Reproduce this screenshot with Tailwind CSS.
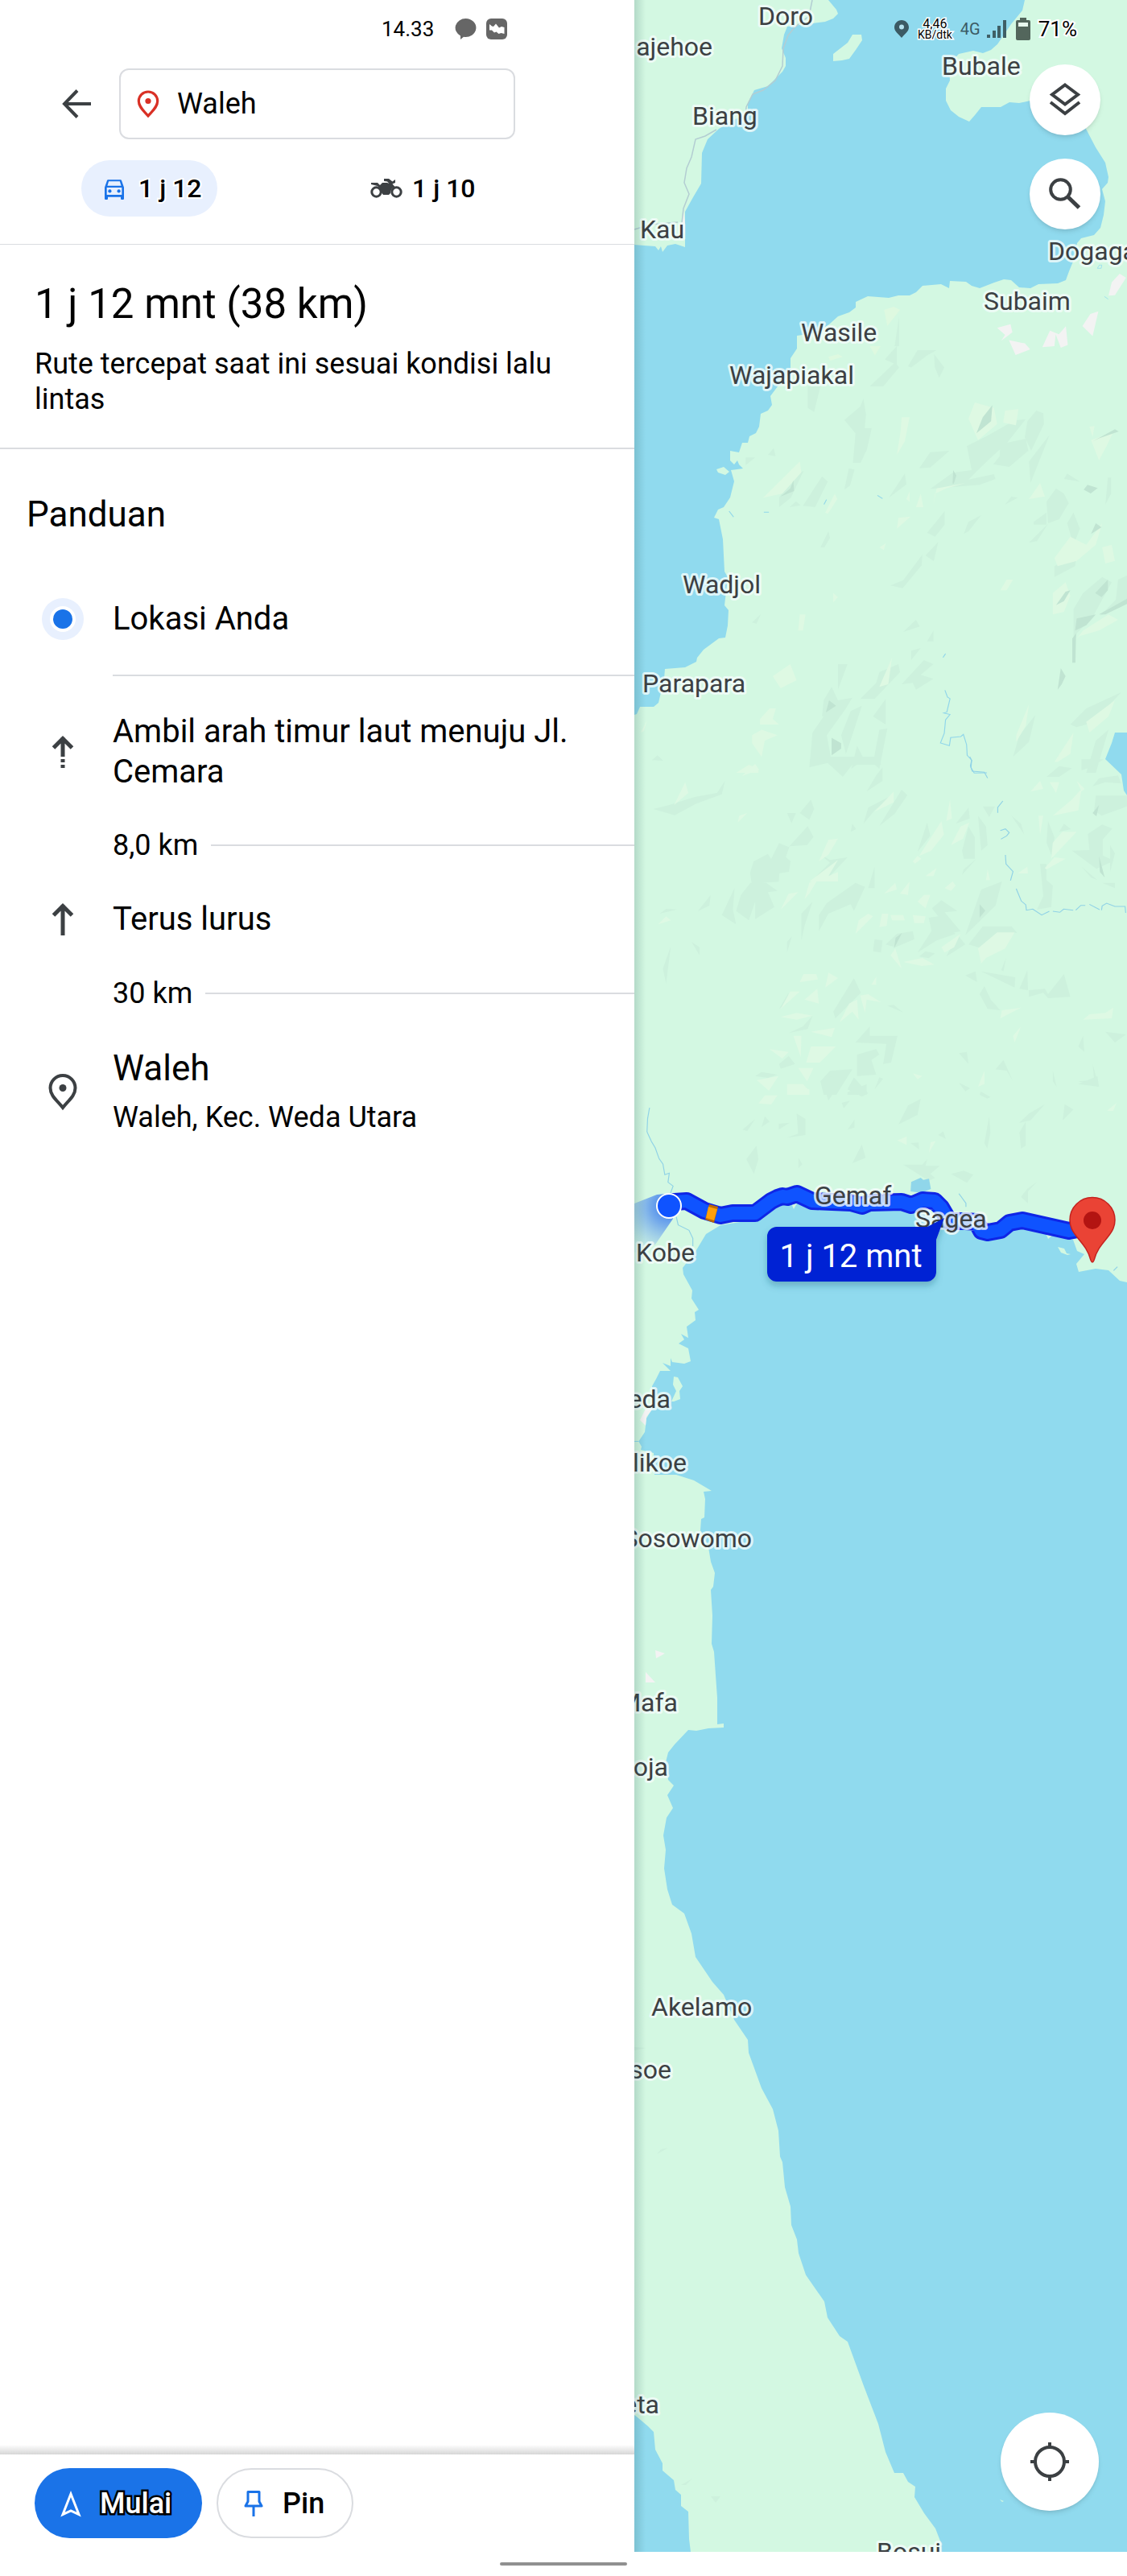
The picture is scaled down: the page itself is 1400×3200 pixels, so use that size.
<!DOCTYPE html>
<html lang="id">
<head>
<meta charset="utf-8">
<meta name="viewport" content="width=device-width, initial-scale=1">
<title>Rute ke Waleh</title>
<script src="https://cdn.jsdelivr.net/npm/@tailwindcss/browser@4"></script>
</head>
<body class="bg-white text-black font-['Roboto',sans-serif]">
<div class="grid min-h-screen grid-cols-[minmax(0,788fr)_minmax(0,612fr)]">

  <!-- Directions panel -->
  <aside class="flex flex-col bg-white">
    <header class="border-b border-[#dadce0] pt-5 pb-[34px]">
      <div class="flex h-8 items-center pl-[474px]">
        <span class="text-[26px] leading-8">14.33</span>
        <svg class="ml-[26px] h-[26px] w-[27px]" viewBox="0 0 27 26" fill="#666"><path d="M13.500 0a13 11.500 0 1 1-2.500 22.800L7 26v-4.600A13 11.500 0 0 1 13.500 0z"/></svg>
        <svg class="ml-3 h-[26px] w-[26px]" viewBox="0 0 26 26"><rect width="26" height="26" rx="6" fill="#666"/><path d="M4 7l3 2.500 2 .5 3-3.500 4 5 3-1.500 3.500 1v8l-4-1-3 1-3-2.500-2.500 1-3-3H4z" fill="#fff"/></svg>
      </div>
      <div class="mt-[33px] flex items-center pl-[77px]">
        <button type="button" aria-label="Kembali" class="mr-[35px]">
          <svg class="h-9 w-9" viewBox="0 0 36 36" fill="none" stroke="#3c4043" stroke-width="4"><path d="M36 18H4M19 1.500L3 18l16 16.500"/></svg>
        </button>
        <label class="flex h-[88px] w-[492px] items-center rounded-xl border-2 border-[#dadce0] pl-5">
          <svg class="h-[34px] w-7 shrink-0" viewBox="0 0 28 34"><path d="M14 2C7.500 2 2.300 7 2.300 13.500 2.300 21 9 26 14 32c5-6 11.700-11 11.700-18.500C25.700 7 20.500 2 14 2z" fill="none" stroke="#d93025" stroke-width="3.200"/><circle cx="14" cy="13.500" r="3.600" fill="#d93025"/></svg>
          <input type="text" value="Waleh" aria-label="Tujuan" class="ml-[22px] w-full min-w-0 bg-transparent text-[36px] leading-11 outline-none">
        </label>
      </div>
      <nav class="mt-[26px] flex h-[70px] items-center pl-[101px]">
        <button type="button" class="flex h-[70px] w-[169px] items-center rounded-full bg-[#e8f0fe] pl-[25px] text-[32px] font-medium">
          <svg class="mr-3.5 h-8 w-8 shrink-0" viewBox="0 0 24 24" fill="#1a73e8"><path d="M18.900 5c-.2-.6-.8-1-1.400-1h-11c-.7 0-1.200.4-1.400 1L3 11v10.500c0 .5.500 1 1 1h1c.600 0 1-.5 1-1V20h12v1.500c0 .5.500 1 1 1h1c.500 0 1-.5 1-1V11zM6.800 5.500h10.300L18.400 9.500H5.600zM19 18H5v-6.700h14z"/><circle cx="7.800" cy="14.600" r="1.600"/><circle cx="16.200" cy="14.600" r="1.600"/></svg>
          <span class="[-webkit-text-stroke:4px_#fff] [paint-order:stroke_fill]">1 j 12</span>
        </button>
        <button type="button" class="ml-[190px] flex items-center text-[32px] font-medium">
          <svg class="mr-3 h-7 w-10 shrink-0" viewBox="0 0 40 28" fill="none"><circle cx="7.500" cy="18.500" r="5.700" stroke="#3c4043" stroke-width="3"/><circle cx="32.500" cy="18.500" r="5.700" stroke="#3c4043" stroke-width="3"/><path d="M1 7h8l3 3 3-3h6l2.500 1-2.500-2.500-4-.5V2h6l4.500 3.500L31 3v4l-3.500 1.500 3 3.500c-4 2-5 4-5.500 8l-2 2h-7l-3-4c0-4-2-7-8-8L1 9z" fill="#3c4043"/></svg>
          <span>1 j 10</span>
        </button>
      </nav>
    </header>

    <section class="border-b-2 border-[#dadce0] px-[43px] pt-11 pb-[38px]">
      <h1 class="text-[51px] leading-[60px]">1 j 12 mnt (38 km)</h1>
      <p class="mt-[22px] text-[36px] leading-11">Rute tercepat saat ini sesuai kondisi lalu lintas</p>
    </section>

    <section class="grow pt-14">
      <h2 class="pl-[33px] text-[44px] leading-[50px]">Panduan</h2>
      <ol class="mt-[79px] text-[40px] leading-[50px]">
        <li>
          <div class="flex items-center gap-9 pb-[43px] pl-[52px]">
            <svg class="h-[52px] w-[52px] shrink-0" viewBox="0 0 52 52"><circle cx="26" cy="26" r="26" fill="#e8f0fe"/><circle cx="26" cy="26" r="16" fill="#fff"/><circle cx="26" cy="26" r="12" fill="#1a73e8"/></svg>
            <p>Lokasi Anda</p>
          </div>
          <div class="ml-[140px] h-0.5 bg-[#dadce0]"></div>
        </li>
        <li class="pt-11">
          <div class="flex items-center gap-9 pr-12 pl-[52px]">
            <svg class="h-[52px] w-[52px] shrink-0" viewBox="0 0 52 52" fill="none" stroke="#3c4043" stroke-width="5"><path d="M26 8v24M14.500 21L26 9.500 37.500 21M26 35v4M26 42v4"/></svg>
            <p>Ambil arah timur laut menuju Jl. Cemara</p>
          </div>
          <div class="mt-11 flex items-center pl-[140px]"><span class="text-[36px] leading-11">8,0 km</span><span class="ml-4 h-0.5 grow bg-[#dadce0]"></span></div>
        </li>
        <li class="pt-11">
          <div class="flex items-center gap-9 pl-[52px]">
            <svg class="h-[52px] w-[52px] shrink-0" viewBox="0 0 52 52" fill="none" stroke="#3c4043" stroke-width="5"><path d="M26 8v38M14.500 21L26 9.500 37.500 21"/></svg>
            <p>Terus lurus</p>
          </div>
          <div class="mt-11 flex items-center pl-[140px]"><span class="text-[36px] leading-11">30 km</span><span class="ml-4 h-0.5 grow bg-[#dadce0]"></span></div>
        </li>
        <li class="flex items-center gap-9 pt-[46px] pl-[52px]">
          <svg class="h-[52px] w-[52px] shrink-0" viewBox="0 0 52 52"><path d="M26 6c-8.700 0-15.500 7-15.500 15.500C10.500 31.500 19.500 37.500 26 46c6.500-8.500 15.500-14.500 15.500-24.500C41.500 13 34.700 6 26 6z" fill="none" stroke="#3c4043" stroke-width="4"/><circle cx="26" cy="21.500" r="4.500" fill="#3c4043"/></svg>
          <div>
            <p class="text-[44px]">Waleh</p>
            <p class="mt-3.5 text-[36px] leading-11">Waleh, Kec. Weda Utara</p>
          </div>
        </li>
      </ol>
    </section>

    <footer>
      <div class="h-3 bg-linear-to-b from-white to-[#d6d6d6]"></div>
      <div class="flex gap-[18px] pt-[17px] pl-[43px]">
        <button type="button" class="flex h-[87px] w-[208px] items-center rounded-full bg-[#1a73e8] pl-[33px] text-[36px] font-medium text-white">
          <svg class="mr-6 h-8 w-6 overflow-visible" viewBox="0 0 24 32" fill="none" stroke="#fff" stroke-width="3"><path d="M12 4L2 29.500l10-4.500 10 4.500z"/></svg>
          <span class="[-webkit-text-stroke:5px_#000] [paint-order:stroke_fill]">Mulai</span>
        </button>
        <button type="button" class="flex h-[87px] w-[170px] items-center rounded-full border-2 border-[#dadce0] pl-8 text-[36px] font-medium">
          <svg class="mr-6 h-8 w-6" viewBox="0 0 24 32" fill="none" stroke="#1a73e8" stroke-width="3"><path d="M5 1.500h14v12l3 5.500H2l3-5.500zM12 19v13" stroke-linejoin="round"/></svg>
          <span>Pin</span>
        </button>
      </div>
      <div class="mt-[30px] mr-[9px] mb-[13px] ml-auto h-1 w-[158px] rounded-full bg-[#909090]"></div>
    </footer>
  </aside>

  <!-- Map -->
  <section class="flex flex-col pb-[30px]">
    <div class="relative grow overflow-hidden bg-[#90daee]">
      <svg class="absolute inset-0 h-full w-full" viewBox="0 0 612 3170" preserveAspectRatio="xMinYMin slice" aria-label="Peta rute">
        <defs>
          <linearGradient id="edge"><stop offset="0" stop-color="#205050" stop-opacity=".18"/><stop offset="1" stop-color="#205050" stop-opacity="0"/></linearGradient>
          <radialGradient id="beam" gradientUnits="userSpaceOnUse" cx="43" cy="1498" r="62"><stop offset="0" stop-color="#1b62f0" stop-opacity=".9"/><stop offset=".4" stop-color="#3a7af0" stop-opacity=".6"/><stop offset="1" stop-color="#6fa8f0" stop-opacity=".1"/></radialGradient>
          <filter id="soft" x="-20%" y="-20%" width="140%" height="170%"><feDropShadow dx="0" dy="5" stdDeviation="4" flood-color="#1f5e74" flood-opacity=".35"/></filter>
        </defs>
        <rect width="612" height="3170" fill="#90daee"/>
        <!-- land masses -->
        <g fill="#d3f8e2">
          <path d="M0 0H241L251 12 253 17 247 23 237 27 229 28 190 33 186 43 183 60 188 72V82L184 89 176 97 166 107 149 112 145 120 141 128V140L122 150 105 160 91 173 84 190 83 228 73 245 63 263V307L51 303 41 305 35 313 33 306 30 311 26 306 12 305 0 304z"/>
          <path d="M271 43H282L283 50 275 62 267 73 258 75 247 76V67L265 53z"/>
          <path d="M485 0L482 13 468 30 451 55 443 62 433 66 421 63 403 67 391 80 392 100 387 110V125L393 137 403 145 416 151 423 143 431 133 455 133 466 127 478 128 492 125H550L561 160 573 183 585 202 589 220 588 227 581 235 585 250 583 267 579 283 571 292 555 296 550 302 547 320 540 337 536 348 526 352 502 353 492 358 478 357 468 348 459 347 447 351 429 358 419 355 412 350 392 349 391 358 381 353 358 355 350 363 342 367H328L316 370 290 368 275 375V382L267 388 253 393 243 402 229 413 202 417V433L194 445V462L178 480 169 492 171 503 166 510 157 514 155 530 151 538 143 542 141 550H134L130 562 119 560V572L124 577 128 572 130 577 135 582 120 584 124 598 119 618 111 630 104 633 99 643 105 645 110 670 112 710 116 717 112 752 117 758 116 777 113 792 105 793 86 807 78 817 77 822 63 829 38 831 37 843 30 873 24 878H7L3 887 0 888V1790H5L9 1797 8 1801 24 1805 25 1832 52 1832 74 1839 96 1852 86 1853 88 1862 87 1885 83 1887 82 1901 92 1922 95 1940 100 1954 98 1971 95 1975 97 2007 96 2042 99 2052 101 2081 103 2109V2142L111 2141V2146L92 2147 77 2150 67 2149 50 2167 42 2177 39 2189 42 2211 49 2218 41 2230 48 2246 40 2258 36 2280 39 2298 37 2321 41 2347 47 2366 62 2377 71 2402 76 2431 97 2462 111 2478 124 2509 141 2534 142 2550 158 2594 172 2620 179 2647 181 2679 184 2686 187 2717 194 2741 195 2764 202 2782 204 2799 213 2826 236 2859 240 2879 255 2902 265 2909 285 2964 303 3011 312 3046 323 3072H334L340 3083 349 3089 348 3102 360 3122 374 3141 381 3159V3170H70L68 3154 67 3120 58 3113V3099L51 3093 49 3081 35 3069V3060L26 3043 24 3021 17 3014 4 3003 0 3000V1791H5L13 1779 15 1762 22 1750V1722L27 1713 32 1703H45L35 1693 45 1697V1687L47 1692 62 1694 70 1691 67 1675 55 1669 62 1664 58 1657 67 1662 65 1648 76 1640 75 1630 80 1627 71 1613 72 1603 61 1583 60 1575 77 1553 89 1533 107 1522 150 1515 170 1500 194 1493 198 1502 203 1493 221 1500 283 1500 344 1503 391 1520 421 1530 439 1536 480 1524 511 1532 514 1539 519 1535 545 1540 550 1554 559 1558 549 1570 552 1580 573 1576 589 1578 603 1591 612 1593V0z"/>
          <path d="M102 583L111 580 118 586 113 590 104 587zM49 1710L54 1711 60 1722 56 1728 57 1738 49 1741H46L52 1728 48 1720zM454 3105l5 2-2 1zM526 1549l8 2 3 6 5 1-4 1-8-3z"/>
        </g>
        <path fill="#90daee" d="M612 910H597L593 923 585 943 605 962 608 982 612 988z"/>
        <!-- hill shading, northern part -->
        <g transform="translate(-8 0) scale(.3954 .3333)">
          <path fill="#f3f3f3" d="M1545 1020l20 15-35 65-20 2 10-50zM1478 1160l-18 93-32-38 25-45zM1160 1222l42-14 6 30-35 32 12-22zM1197 1268l50 12 17 22-46 21zM1326 1232l28 14 22-30 6 70-22 10-16-50-4 44-38 4z"/>
          <path fill="#cdf1dd" d="M845 1290v70l-38-20zM880 1365l30-60h60l-30 20-50 45zM962 1320l32 50-16 38-14-40zM760 1440l80-90 12 20-50 70zM852 1180v110l-14 0z"/>
          <path fill="#def9e0" d="M805 1155l30-12 20 12-40 60zM760 1290l34 0-18 35zM630 1330l30-10 15 10-40 14z"/>
          <path fill="none" stroke="#90daee" stroke-width="2" d="M1475 1000l6-12 8 0-2 12zM1497 1105l12 10"/>
        </g>
        <g transform="translate(-8 480) scale(.3954 .3333)">
          <path fill="#cdf1dd" d="M740 45l8 60-4 50 22 0-15 80-20 50h-24l8-110-35-50 50-50zM565 0h40l-20 95-20-15zM915 305l35-60 60-5-60 62zM950 382l70-60 60-10-15-90 60-35 90-60 35-5-60 90-60 65-60 70 80-20 5 18-50 22zM1255 130l28-40 22 10 2 40-40 100-20-50zM1170 215l80-20 8 45-60 60-50-10 20-30zM1325 180l-60 180-5-80zM820 415l50-90 5 40zM680 385l14-80 18 5-14 60zM550 445l60-110 18 20-40 95zM475 450v-35l45-85 32-15-40 100zM508 450l20-22 15 15zM605 600l25-60 5 25-18 35zM940 545l35-50 20-30v50l-30 45zM935 630l40-50-14 72zM825 742l40-20 60-95-2 40-60 85zM1055 550l15-45 40-25-40 60zM1275 505l40-35v45h-40zM1320 510l-5-80 30-50 25 20 15 35-30 60zM1260 582l60-70-35 65zM865 915l40-45 12 25zM940 950l20-40v40zM390 880l28-32-14 36zM660 1130v-95h30zM730 1165l50-60 10-40 60-30 5 30-80 100zM860 1110l70-90 30 15-40 40 40 15-55 40-10-25zM770 1230l40-65v95zM610 1230l5-60 25-50 20 50 45-10-20 40-60 100 15 100-70 20 10-130 35-60zM670 1300l30-90 35-20-30 110-20 70zM790 1280l25-5-25 150-20-20zM720 1340l22 50-40 35zM1185 440l20-30 20 5zM1400 960l0-130 30-60 60-60 30 20-60 130-50 60zM1540 720l28-15v100l-45 30-40 20 50-60zM1390 1260l50-60 110-60-40 50-40 60-60 20zM1440 1440l30-120 40-40-20 80-20 80zM1210 1380l20-80 50-75-20 100zM1400 590l-20-80 20-40 20 60zM1500 440l8-100h10v60zM1370 345l10-20 40 30zM1340 670l70-40-5 40-65 40zM890 1020v-35l30-10zM370 265h30l-30 28zM440 255l18-25 6 30zM75 1393l18-18 18 20z"/>
          <path fill="#def9e3" d="M860 115l25 0-15 90-25 50 12-90zM1090 60l60 20 10 60-60 60-30-80zM1185 90l42-5-8 60-40-10zM480 350l60-70 5 40-60 80-60 15zM1455 200l70-30-20 50-25 55zM1450 150l16-2-6 40zM620 470l30-70 8 20-30 55zM845 530l5-40 38-5zM790 600l20-15-6 25zM960 440l10-60 90-20-60 20-35 20zM1170 760l20-40 20 0-20 40zM645 805v-35l15 15zM535 910l5-60 18 0-8 60zM1340 640l50-80 50 30 50-80-20 80-60 60-60 20zM1335 850l0-80 40-40 15 50-20 60zM1410 940l20-30 80-60 30 20-60 40-60 20zM455 1080l55-45 20 60-50 30zM415 1240l30-40 20 0-10 40 20 20-60 0zM390 1300l30-20 50 20-40 20-10 60-30-50zM1220 1300l40-115-10 80-30 60zM1440 1250l90-80-20 60-60 60zM1340 1400l60-110-10 80-40 30zM790 1120l40-110-12 100zM40 1290l20-45-10 40zM340 1440l40-30 30 15v15zM1490 600l30-10 10 60-30 10zM1260 420l35-60 15 50zM905 450l15-50 8 50zM875 420l10-30v40z"/>
          <path fill="#c0e4d2" d="M1095 175l20-60 30-45-4 60zM1020 362l2-50 10 20-8 30zM480 410l30-30 10-30 2 40zM1432 385l12-18 32 12-22 20zM1460 205l70-45 12 8-60 25zM1455 550l15-40 18 15zM1468 770l40-50v40l-20 25zM1345 815l30-50 15-5-20 40zM1405 910l5-45 60-15-30 40zM1396 1030l0-90 12-20-2 110zM1350 1130l10-80 15 30-12 30zM622 1215l10-45 22 20zM640 1375v-65l30 20v20zM1480 850l90-60v20l-70 40z"/>
          <path fill="none" stroke="#90d6ea" stroke-width="3" d="M996 1132l8 26 8 6-10 50-10 3 20 6-14 20-4 50-12 36 28 10 4-30 32-4 8-8 10 38 2 40 14 18-2 28 10 20 40-1M616 440l8-18M784 406l16 12M427 469h16M318 465l14 22M990 1010l8-14"/>
        </g>
        <!-- hill shading, middle part -->
        <g transform="translate(-8 940) scale(.3954 .3333)">
          <path fill="#cdf1dd" d="M80 195l50-15 80-30 70-15 25-45-10 50-80 35-68 43zM395 390l45-28 10 20 25-60 30 15 60-78 18 40-20 30-55 5-12 40 15 15-5 40-30 5-2 32-30 2-55 5-5-40zM540 210l35-50 10 35-15 40zM500 210l28 0-14 38zM340 575l15-60 30-45h50l35 30-30 5 20 55-60 45 0-65-20 70zM295 590l40-100-5 80 10 55zM600 650v-60l25-45 90-75 30 15-35 90-10-25-70 35zM545 685v-100l35-45-25 90zM220 575l40-60-4 40zM575 465l60-70-30-30 30 20 55-10-55 70zM740 250l15-60 80-50-60 60zM790 258l70-135 18 20-40 70zM750 130l30-60 20-30v50zM590 0h200l5 30-90 0-30 45-50-55zM910 355l30-110 10 50zM1030 250l40-60 4 40zM1100 220l25 40 5 70-20 20zM1050 350l20-90 20 40 0 80-35 0zM1050 440l45-60-40 40zM1060 665l50-170 65-30-20 90zM1115 185l38 0-18 40zM1205 220l30 30 10 40zM910 730l60-110 60 40-60 25zM945 600l30-5-20-30 30-30 50 40-40 5 50 70-60 15-30-10zM810 700l35-40 50-10 5 30-60 30zM770 725l5-45 25 5-5 45zM1000 745l20-45 20-30 20 30zM1070 700l45-68h90l18 24-60 0-60 55zM915 745l20-20 30 8-20 18zM1060 815l32-15 5 40zM1110 800l107 22-2 38zM1105 885l15-30 20 50 30 40-40-5zM1230 865l25-70 2 75zM1260 870l50-5 10 20 50-75 20 85-70 5-15-20-45 15zM645 950l65-125 22 55-80 95zM475 940l30-60-5 40zM505 1030l45-25 30-40-15 50zM715 1065l45-60 0 35 87 0-20 100-25 5 10-75zM720 1110l60-20 10 20-25 20 15 55-60 5zM605 1210l30-40 70-5-50 95h-40zM475 1145l30-30 20 30-45 18zM400 1190l20-15 50 10-30 12zM690 1250l60-30v40h-60zM1315 75l40-40 40 8-40 32zM1425 50v-40l70 0-40 30zM1460 110l20-30 60-10 10 30-50-5zM1465 200l5-55h98v40l-80 35zM1395 350l55-2-5-60 45-35 32 15-30 40v60l35 20-55 30zM1515 430v-100l15 30zM1285 570l20-50-10-120 20 0 0 60 20 20-5 80zM1490 470h40v20zM1415 1210l50-5-5-60 20 85zM1500 1025l65 10-35 30zM1415 1080l15-40 4 60zM1155 1165l25-35 30 80-20-40zM1040 1105l25-5 5 45zM1335 1170l12 60-12-20zM110 790l25-85-15 140zM200 690l25 20v30zM500 730v-40l15-20zM100 585l20-18 35 2zM700 280l5-30 12 20zM755 490l20-80v80zM1320 240l20 60-5 80-20-60zM1355 280l15-30 22 20zM1425 410l50 50-20-10zM815 928l50 25-30-28zM1180 800l8-50-15 45z"/>
          <path fill="#def9e4" d="M145 180l35-85 10 40zM358 72l42-45 12 22zM345 245l5-25 25-10zM775 205l60-75 0 40zM915 370l70-130 8 50-40 60zM1000 240l12-80 6 70zM1015 330l30-70 28-15-20 60zM570 465l90-80-30 60 30-15v35zM555 530l15-60 30-20-30 60zM600 390l30-80 30-5-30 60zM480 570l25-60 30-5zM895 390l15-20 12 10-20 18zM935 445l35-30-10 30zM805 510l35-40 5 25zM855 510l30-45-5 50zM910 540l20-25 20 0-15 50zM995 490l25-25 10 15-15 20zM715 660l10-50 30-25 15 10zM790 635l8-50 20 0-5 45zM825 590l40 0 5 20-40 0zM895 590l40 5-5 25-30 0zM985 710l60-50-20 50-30 20zM1100 715l60-60 55 0-30 60-60 35-15 20zM825 740l15-25 20 75zM865 765l60-15 38 25-40 5zM1330 380l5-60 30-40 45 0zM1310 415l30-40 35 5-60 40zM1265 130l30-40 10 30zM1325 95l30 0-10 40zM1335 220l60-60 30-40-10 80zM1410 90l25 30-10 10zM1295 290l-5-70 15 0zM1225 435l30-25 2 25zM1125 460l5-40 8 40zM540 840l12-30 40 0 5 20zM620 860l10-55 30 20zM480 940l30-65 30 0zM555 905l40-40 5 55zM730 890l25-5 40 30-45-10-5 50zM665 990l30-70 25-15 5 75-20-30zM480 970l50-15 50 10-50 15zM575 1025l75-15-10 35zM520 1040h25l-2 80zM560 1140l15-60 50 0 28 0-50 60zM445 1090l60 10-20 25zM535 1160h48l-20 50zM405 1205l68-15-30 55zM500 1220l70 20v20h-70zM1430 980l20-20 50-5 25-20-5 40zM1170 975l5-30 60-10zM1210 1040l25-35-20 60zM1100 1230l20-60v50zM895 1180l30 10-15 12zM95 625l25-30 15 15zM765 850l15-30v30z"/>
          <path fill="#c0e4d2" d="M1105 600v-50l18 24zM1460 210l20-30-8 42zM1480 370l18 80-15-20zM836 715l5-40 20-18z"/>
          <path fill="none" stroke="#90d2e6" stroke-width="3" d="M1074 0l6 14-4 20 6 20 38 4 10 22M1178 165l-16 24v20M1170 275l16-6 12 14-8 12-18 12M1186 366l2 34 22 28-8 34M1220 492l16 46 14 14 2 20 20-4 28 22 24-14M1335 576l22 4 12-12 30 4M1407 572l16-18h14M1450 550l32 20M1488 572l2-16 14-10 26 12h32l2 24"/>
        </g>
        <g transform="translate(-8 1340) scale(.3954 .3333)">
          <path fill="#cdf1dd" d="M610 10l30-20 30 20-40 72zM690 40l20-45 45 60-20 12zM850 170l30-70 40-25-10 60zM500 220l35-15-5-75 28 20v60zM360 190l40-40-25 45zM420 180l10-40 15 20zM474 190v-22l34-4zM705 315l30-70 12 50zM372 300l32-50 6 50-14 55zM865 320l60 0 15-20-5 25 45 0-30 30 15 15-20 10zM1015 355l40-12 30 15-20 30zM888 240l25-2 2 26zM975 210l16-14 8 28zM1260 130l50-35-45 60-36 10zM1230 200l20-40v90l-15 10zM1366 155l6-60 28 20zM1235 440l20-30 30-25-28 35v45zM1120 240l15-100 4 60-10 60zM1040 15l35 20-15 12zM1415 20l60-30 5 40zM536 295l12 24-12 14zM690 190l22-38v30zM672 90l26-8-20 28zM1105 60l4-12 30 20-10 6zM775 40l15-45 12 5z"/>
          <path fill="#def9e4" d="M410 92l20-30 40 0-20 34zM500 20l50 0 20 26-60 2zM846 230l30-15v32zM946 275l5-38 16-5zM1505 120l30-30-10 30z"/>
          <!-- rivers and lakes -->
          <path fill="none" stroke="#90d2e6" stroke-width="3" d="M68 108l-6 40-2 50 14 36 12 24 12 40 12 20 6 40 14-6-4 34 16 14-14 46M152 515l6 30 34 20 12 30v30M1040 428l22 36 0 14M1526 715l12-14"/>
          <path fill="#90d6ea" d="M890 385l30-16 8 8 18-4 6 38-30 14-34-5z"/>
        </g>
        <path fill="#f3f3f3" d="M26 2050l12 4-11 6zM14 2077l12 13-12 0zM14 1750h9l-8 10-1 11-7-7zM61 262l2 14v14l-6-2z"/>
        <path fill="#cdf1dd" d="M28 2676l5-6 9-2zM95 3101h12l-6 8zM58 3087l14-8-8 8zM0 2543l15 1-15 3z"/>
        <!-- minor roads -->
        <path fill="none" stroke="#b3cdd2" stroke-width="1.500" d="M221 0l-4 20-18 14-8 10-6 16-1 22-9 18-15 12-13 5-8 16-1 12M102 161l-14 8-12 4-5 22-6 14-3 18 6 14-7 18-2 18M0 285l20-6 34-3"/>

        <!-- route -->
        <path fill="url(#beam)" d="M50 1482L28 1484 0 1495V1556L26 1546 48 1514z"/>
        <g fill="none" stroke-linejoin="round" stroke-linecap="round">
          <path stroke="#0f25e6" stroke-width="22" d="M50 1493L65 1492 87 1504 107 1510 122 1507H150L170 1492 178 1488 184 1486 190 1487 202 1483 221 1492 269 1494 283 1498 292 1494 332 1493 344 1497 358 1491 373 1492 381 1500 391 1517 411 1517 425 1518 431 1529 439 1531 455 1528 466 1519 482 1516 540 1529 556 1526"/>
          <path stroke="#0f53ff" stroke-width="16" d="M50 1493L65 1492 87 1504 107 1510 122 1507H150L170 1492 178 1488 184 1486 190 1487 202 1483 221 1492 269 1494 283 1498 292 1494 332 1493 344 1497 358 1491 373 1492 381 1500 391 1517 411 1517 425 1518 431 1529 439 1531 455 1528 466 1519 482 1516 540 1529 556 1526"/>
        </g>
        <path fill="#bd6a00" d="M93 1496l11 3-5 20-11-4z"/><path fill="#ffa00a" d="M92 1499l11 3-4 14-10-3z"/>
        <circle cx="43" cy="1498" r="15" fill="#0f53ff" stroke="#fff" stroke-width="2"/>

        <!-- place names -->
        <g font-family="Roboto, sans-serif" font-size="32" fill="#3c4043" stroke="#f4fdfb" stroke-opacity=".8" stroke-width="6" stroke-linejoin="round" paint-order="stroke">
          <text x="154" y="31">Doro</text>
          <text x="97" y="69" text-anchor="end">ajehoe</text>
          <text x="382" y="93">Bubale</text>
          <text x="72" y="155">Biang</text>
          <text x="7" y="296">Kau</text>
          <text x="514" y="323">Dogaga</text>
          <text x="434" y="385">Subaim</text>
          <text x="207" y="424">Wasile</text>
          <text x="118" y="477">Wajapiakal</text>
          <text x="60" y="737">Wadjol</text>
          <text x="10" y="860">Parapara</text>
          <text x="224" y="1496">Gemaf</text>
          <text x="349" y="1525">Sagea</text>
          <text x="2" y="1567">Kobe</text>
          <text x="45" y="1749" text-anchor="end">eda</text>
          <text x="65" y="1828" text-anchor="end">likoe</text>
          <text x="146" y="1922" text-anchor="end">Sosowomo</text>
          <text x="54" y="2126" text-anchor="end">Mafa</text>
          <text x="42" y="2206" text-anchor="end">oja</text>
          <text x="21" y="2504">Akelamo</text>
          <text x="46" y="2582" text-anchor="end">soe</text>
          <text x="31" y="2998" text-anchor="end">eta</text>
          <text x="301" y="3181">Bosui</text>
        </g>

        <!-- travel time callout -->
        <path filter="url(#soft)" fill="#0520d4" d="M177 1524H364L385 1513 375 1540V1580a12 12 0 0 1-12 12H177a12 12 0 0 1-12-12V1536a12 12 0 0 1 12-12z"/>
        <text x="269" y="1574" text-anchor="middle" font-family="Roboto, sans-serif" font-size="40" fill="#fff">1 j 12 mnt</text>

        <!-- destination -->
        <path fill="#ea4335" stroke="#c5221f" stroke-width="1.500" d="M569 1487.500a28 28 0 0 1 28 28c0 20-20 26-26 50q-2 5-4 0c-6-24-26-30-26-50a28 28 0 0 1 28-28z"/>
        <circle cx="569" cy="1516" r="11" fill="#b31412"/>
        <rect width="14" height="3170" fill="url(#edge)"/>
      </svg>

      <!-- status icons over the map -->
      <div class="absolute inset-x-0 top-5 flex h-8 items-center justify-end pr-[62px]">
        <svg class="h-6 w-5" viewBox="0 0 20 24"><path d="M10 1C5 1 1 5 1 10c0 5 5 8 9 13 4-5 9-8 9-13 0-5-4-9-9-9z" fill="#3b5a64"/><circle cx="10" cy="9.500" r="3" fill="#b5e2ef"/></svg>
        <span class="ml-2.5 flex flex-col items-center text-center text-[14px] leading-[13px] [-webkit-text-stroke:3px_#fff] [paint-order:stroke_fill]"><span class="text-[16px] leading-[14px]">4,46</span><span>KB/dtk</span></span>
        <span class="ml-2.5 text-[20px] text-[#3b5a64]">4G</span>
        <svg class="ml-2 h-6 w-6" viewBox="0 0 24 24" fill="#3f5f66"><rect y="19" width="4" height="4"/><rect x="7" y="14" width="4" height="9"/><rect x="13" y="8" width="4" height="15"/><rect x="20" y="1" width="4" height="22"/></svg>
        <svg class="ml-3 h-7 w-[18px]" viewBox="0 0 18 28"><path d="M5 0h8v3h3a2 2 0 0 1 2 2v21a2 2 0 0 1-2 2H2a2 2 0 0 1-2-2V5a2 2 0 0 1 2-2h3z" fill="#53665c"/><path d="M3 6h12v5H3z" fill="#e8f8ee"/></svg>
        <span class="ml-2.5 text-[26px] [-webkit-text-stroke:4px_#fff] [paint-order:stroke_fill]">71%</span>
      </div>

      <div class="absolute top-20 right-[33px] flex flex-col gap-[29px]">
        <button type="button" aria-label="Lapisan peta" class="flex size-[88px] items-center justify-center rounded-full bg-white shadow-md">
          <svg class="h-11 w-11" viewBox="0 0 44 44" fill="none" stroke="#3c4043" stroke-width="4"><path d="M22 3.500L38 15.500 22 27.500 6 15.500zM4 25l18 14 18-14"/></svg>
        </button>
        <button type="button" aria-label="Telusuri" class="flex size-[88px] items-center justify-center rounded-full bg-white shadow-md">
          <svg class="h-11 w-11" viewBox="0 0 44 44" fill="none" stroke="#3c4043" stroke-width="4"><circle cx="16.500" cy="16.500" r="12.300"/><path d="M25.500 25.500L39.500 39" stroke-width="5"/></svg>
        </button>
      </div>
      <button type="button" aria-label="Lokasi saya" class="absolute right-[35px] bottom-[51px] flex size-[122px] items-center justify-center rounded-full bg-white shadow-md">
        <svg class="h-12 w-12" viewBox="0 0 48 48" fill="none" stroke="#3c4043" stroke-width="4"><circle cx="24" cy="24" r="18"/><path d="M24 0v7M24 41v7M0 24h7M41 24h7"/></svg>
      </button>
    </div>
  </section>
</div>
</body>
</html>
